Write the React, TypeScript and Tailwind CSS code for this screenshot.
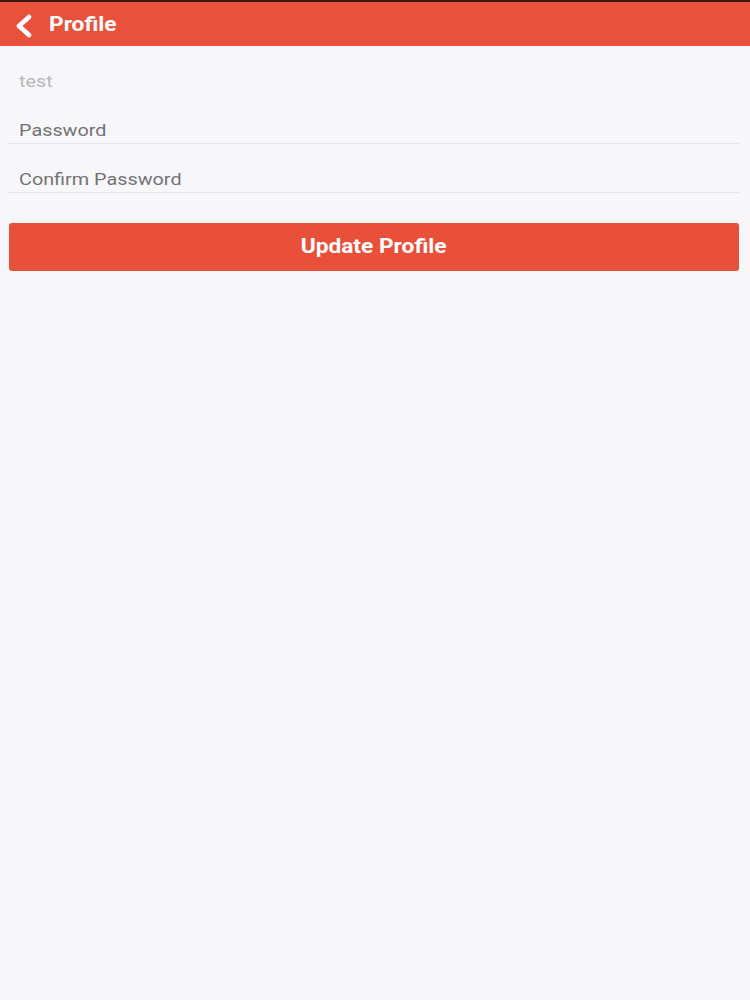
import React from "react";

const font = { fontFamily: "Roboto, 'Liberation Sans', sans-serif" };

function Row({ label, light }: { label: string; light?: boolean }) {
  return (
    <div
      className={`h-[49px] flex items-end pb-[3px] pl-[11px] border-b ${
        light ? "border-transparent" : "border-[#e4e4e8]"
      }`}
    >
      <span
        className={`inline-block origin-left scale-x-[1.165] text-[17px] leading-[20px] ${
          light ? "text-[#b8b8bb]" : "text-[#737375]"
        }`}
      >
        {label}
      </span>
    </div>
  );
}

export default function App() {
  return (
    <div className="min-h-[1000px] bg-[#f7f7f9]" style={font}>
      <div className="h-[2px] bg-[#3a1812]" />
      <div className="h-[44px] bg-[#e8523c] flex items-center">
        <svg width="20" height="24" viewBox="0 0 20 24" className="ml-[14px] mt-[3px]">
          <polyline
            points="15,3 5,12 15,21"
            fill="none"
            stroke="#ffffff"
            strokeWidth="4.6"
            strokeLinecap="round"
            strokeLinejoin="round"
          />
        </svg>
        <span className="ml-[15px] inline-block origin-left scale-x-[1.165] text-white font-bold text-[19.5px] leading-[24px] mt-[1px]">
          Profile
        </span>
      </div>
      <div className="pl-[8px] pr-[11px]">
        <Row label="test" light />
        <Row label="Password" />
        <Row label="Confirm Password" />
        <button className="mt-[30px] ml-[1px] w-[730px] h-[48px] rounded-[3px] bg-[#e8503a] flex items-center justify-center">
          <span className="inline-block scale-x-[1.165] text-white font-bold text-[19.5px] leading-[24px]">
            Update Profile
          </span>
        </button>
      </div>
    </div>
  );
}
